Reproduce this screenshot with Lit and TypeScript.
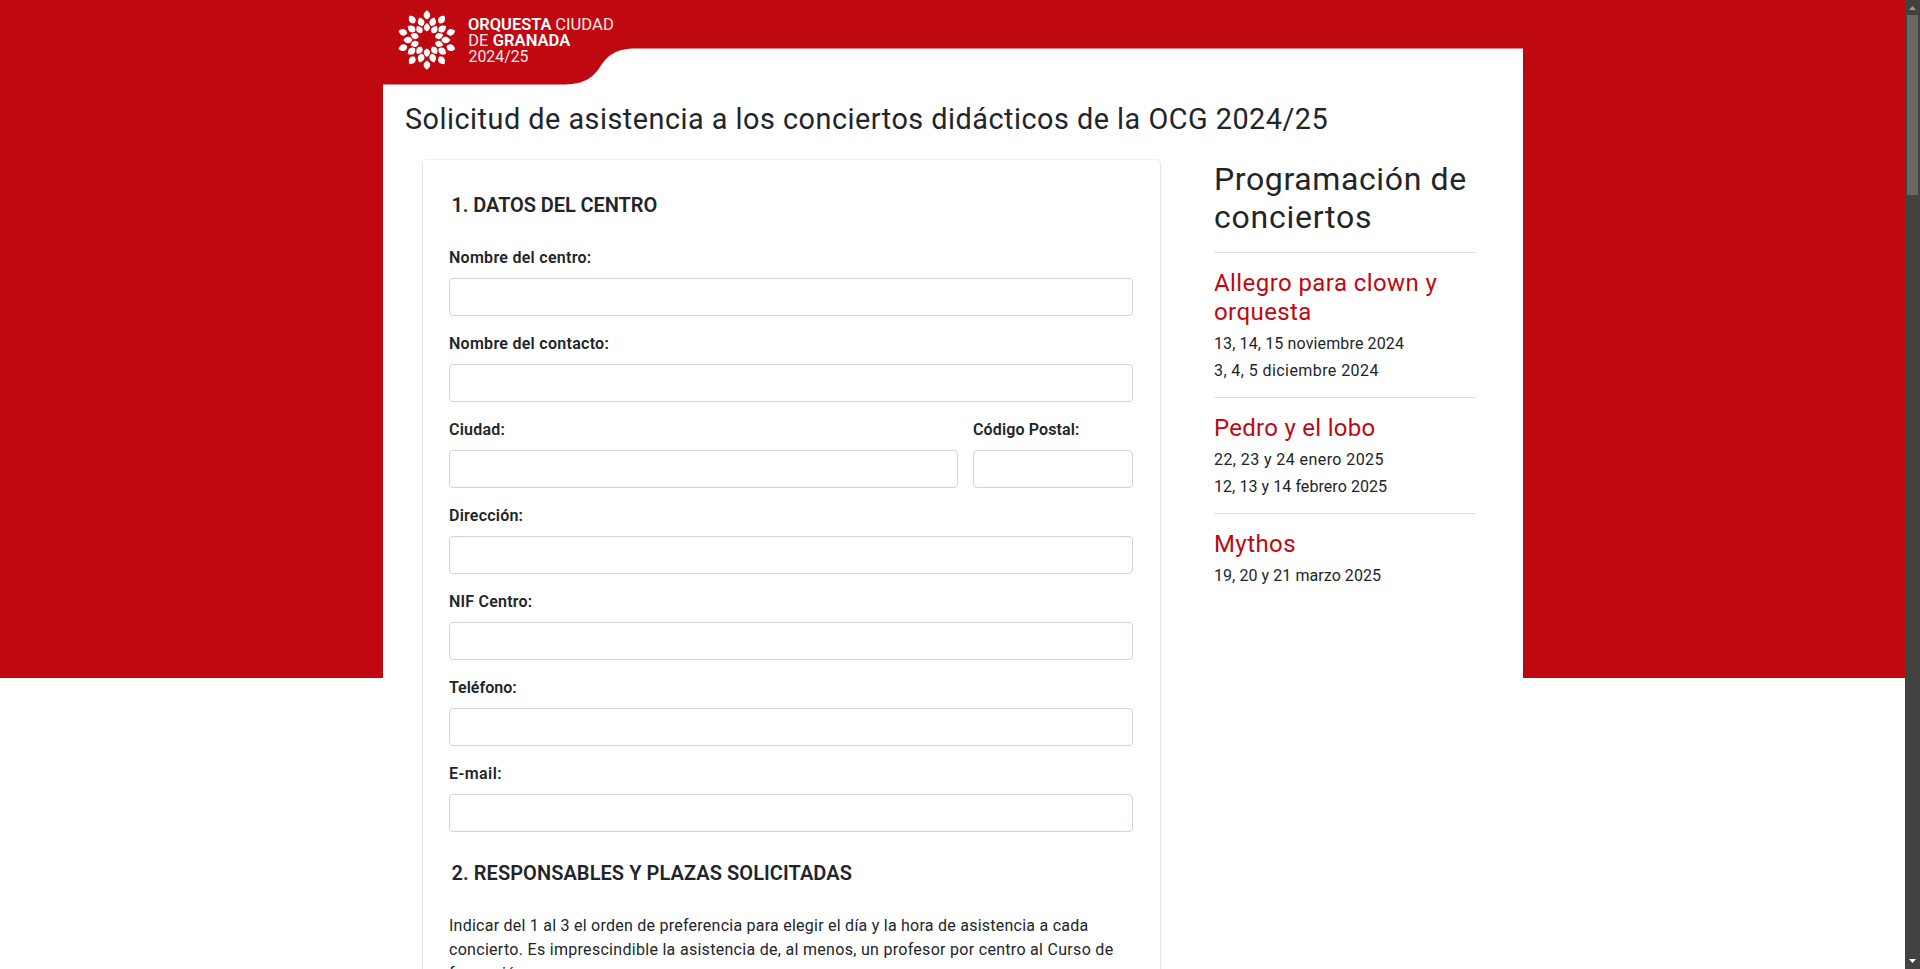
import { LitElement, html, svg, css } from 'lit';
import { customElement } from 'lit/decorators.js';

interface Field { label: string; track: string; }

const FIELDS_TOP: Field[] = [
  { label: 'Nombre del centro:', track: 'k5' },
  { label: 'Nombre del contacto:', track: 'k5' },
];
const FIELDS_BOTTOM: Field[] = [
  { label: 'Dirección:', track: 'k4' },
  { label: 'NIF Centro:', track: 'k4' },
  { label: 'Teléfono:', track: 'k0' },
  { label: 'E-mail:', track: 'k6' },
];
const CONCERTS = [
  { title: ['Allegro para clown y', 'orquesta'], track: 'k6',
    dates: [['13, 14, 15 noviembre 2024', 'k2'], ['3, 4, 5 diciembre 2024', 'k6']] },
  { title: ['Pedro y el lobo'], track: 'k5',
    dates: [['22, 23 y 24 enero 2025', 'k6'], ['12, 13 y 14 febrero 2025', 'k1']] },
  { title: ['Mythos'], track: 'k6', dates: [['19, 20 y 21 marzo 2025', 'k1']] },
];

@customElement('ocg-logo')
export class OcgLogo extends LitElement {
  static styles = css`
    :host { display: block; line-height: 0; }
    .t { font: 400 16.3px Roboto, sans-serif; fill: #fff; }
    .b { font-weight: 600; }
    .l { font-weight: 400; fill: #fbe9ea; }
  `;
  private ring(r: number, offset: number, scale: number) {
    return Array.from({ length: 10 }, (_, i) => svg`
      <path d="M0 -4.9 C1.5 -3.6 3.5 -2.2 3.5 0.4 C3.5 2.6 1.8 3.8 0 4.8 C-1.8 3.8 -3.5 2.6 -3.5 0.4 C-3.5 -2.2 -1.5 -3.6 0 -4.9Z"
        fill="#fff" transform="rotate(${offset + i * 36}) translate(0 ${-r}) scale(${scale})"/>`);
  }
  render() {
    return html`<svg width="1140" height="85" viewBox="0 0 1140 85">
      <path fill="#fff" d="M0 85 V84.6 H178 C200 84.6 209 79 217 67 C225 55 233 48.6 253 48.6 H1140 V85Z"/>
      <g transform="translate(43.9 40)">
        ${this.ring(25.2, 0, 0.95)}${this.ring(19, 18, 0.95)}${this.ring(12.8, 0, 0.88)}
      </g>
      <text class="t b" x="85" y="30" textLength="83.5" lengthAdjust="spacingAndGlyphs">ORQUESTA</text>
      <text class="t l" x="172.3" y="30" textLength="58.5" lengthAdjust="spacingAndGlyphs">CIUDAD</text>
      <text class="t l" x="85.3" y="46" textLength="20" lengthAdjust="spacingAndGlyphs">DE</text>
      <text class="t b" x="109.8" y="46" textLength="77.5" lengthAdjust="spacingAndGlyphs">GRANADA</text>
      <text class="t l" x="85.5" y="62.2" textLength="60" lengthAdjust="spacingAndGlyphs">2024/25</text>
    </svg>`;
  }
}

@customElement('app-root')
export class AppRoot extends LitElement {
  static styles = css`
    * { box-sizing: border-box; }
    :host {
      display: flex; height: 969px; overflow: hidden; background: #fff; color: #212529;
      font: 400 16px/24px Roboto, sans-serif;
    }
    h1, h2, h3, h4, p { margin: 0; font-weight: 400; white-space: nowrap; }
    .page { flex: 1; height: 969px; overflow: hidden; background: linear-gradient(#c00811 0 678px, #fff 678px); }
    .container { width: 1140px; margin: 0 auto; }
    .body { background: #fff; padding: 17px 22.5px 0; height: 900px; }
    h1 { font-size: 28.8px; line-height: 35px; letter-spacing: 0.5px; }
    .cols { display: flex; padding: 22px 0 0 17px; gap: 53px; align-items: flex-start; }
    .card {
      width: 739px; height: 900px; padding: 28px 27px 0 26px; border-radius: 5px;
      border: 1px solid #e6e6e6; border-top-color: #f1f1f1; box-shadow: 0 1px 2px rgba(0, 0, 0, 0.04);
    }
    .legend { font-size: 20px; line-height: 34px; font-weight: 600; padding-left: 2.5px; margin-bottom: 24px; }
    .field { display: block; margin-bottom: 16px; }
    .field span { display: block; font-weight: 600; margin-bottom: 8px; white-space: nowrap; }
    .field input {
      display: block; width: 100%; height: 38px; border: 1px solid #ced4da; border-radius: 4px;
      background: #fff; padding: 6px 12px; outline: none;
    }
    .row { display: grid; grid-template-columns: 509px 160px; justify-content: space-between; }
    .second { margin-top: 24px; }
    .p1 { letter-spacing: 0.243px; }
    .p2 { letter-spacing: 0.295px; }
    .side { width: 262px; padding-top: 1px; }
    h2 { font-size: 32px; line-height: 38.4px; margin-bottom: 15.3px; }
    .h2a { letter-spacing: 0.62px; }
    .h2b { letter-spacing: 0.75px; }
    hr { border: 0; height: 1px; margin: 14px 0 16px; background: #e0e0e0; }
    h3 { font-size: 24px; line-height: 28.8px; color: #c00811; margin-bottom: 5.4px; }
    .date { line-height: 24px; margin-bottom: 3px; }
    .k0 { letter-spacing: 0; }
    .k1 { letter-spacing: 0.07px; }
    .k2 { letter-spacing: 0.13px; }
    .k4 { letter-spacing: 0.22px; }
    .k5 { letter-spacing: 0.28px; }
    .k6 { letter-spacing: 0.42px; }
    .g1 { letter-spacing: -0.08px; }
    .scroll {
      width: 15px; background: #424242; display: flex; flex-direction: column; align-items: center;
      padding: 0 2px;
    }
    .scroll svg { display: block; flex: none; }
    .thumb { width: 11px; height: 180px; background: #686868; }
    .spacer { flex: 1; }
  `;
  private field(f: Field) {
    return html`<label class="field"><span class=${f.track}>${f.label}</span><input type="text"></label>`;
  }
  render() {
    return html`
      <div class="page"><div class="container">
        <ocg-logo></ocg-logo>
        <div class="body">
          <h1>Solicitud de asistencia a los conciertos didácticos de la OCG 2024/25</h1>
          <div class="cols">
            <form class="card">
              <h4 class="legend g1">1. DATOS DEL CENTRO</h4>
              ${FIELDS_TOP.map((f) => this.field(f))}
              <div class="row">
                ${this.field({ label: 'Ciudad:', track: 'k4' })}
                ${this.field({ label: 'Código Postal:', track: 'k2' })}
              </div>
              ${FIELDS_BOTTOM.map((f) => this.field(f))}
              <h4 class="legend second k1">2. RESPONSABLES Y PLAZAS SOLICITADAS</h4>
              <p class="p1">Indicar del 1 al 3 el orden de preferencia para elegir el día y la hora de asistencia a cada</p>
              <p class="p2">concierto. Es imprescindible la asistencia de, al menos, un profesor por centro al Curso de</p>
              <p class="p2">formación.</p>
            </form>
            <aside class="side">
              <h2><span class="h2a">Programación de</span><br><span class="h2b">conciertos</span></h2>
              ${CONCERTS.map((c) => html`
                <hr>
                <h3 class=${c.track}>${c.title.map((t, i) => html`${i ? html`<br>` : ''}${t}`)}</h3>
                ${c.dates.map(([d, k]) => html`<p class="date ${k}">${d}</p>`)}`)}
            </aside>
          </div>
        </div>
      </div></div>
      <div class="scroll">
        <svg width="11" height="15" viewBox="0 0 11 15"><path d="M2 10 L5.5 6 L9 10Z" fill="#9a9a9a"/></svg>
        <div class="thumb"></div>
        <div class="spacer"></div>
        <svg width="11" height="15" viewBox="0 0 11 15"><path d="M2 5 L5.5 9 L9 5Z" fill="#fff"/></svg>
      </div>`;
  }
}
